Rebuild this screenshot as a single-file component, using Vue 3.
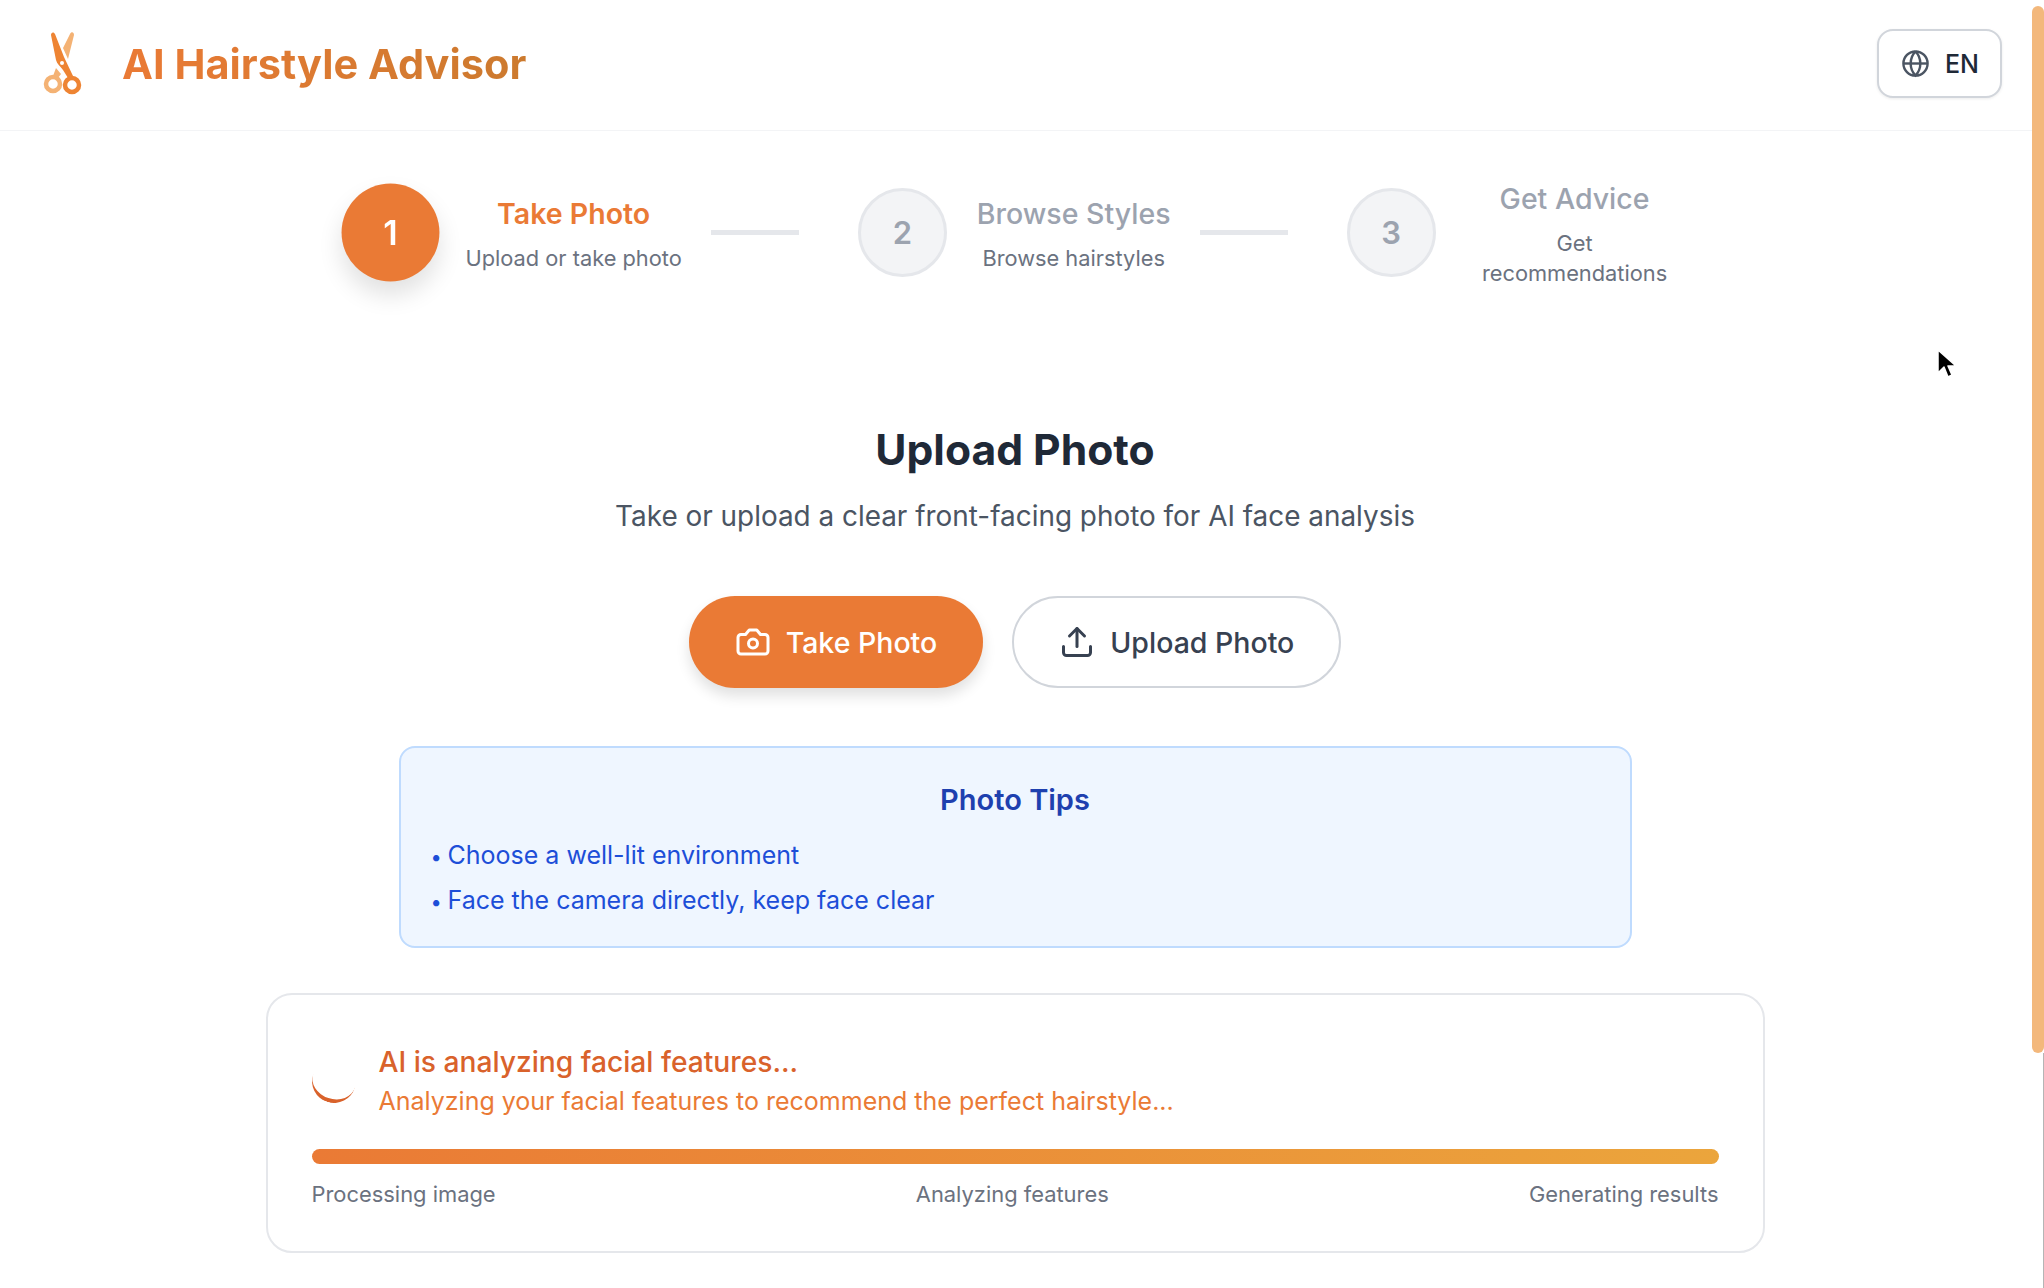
<template>
  <div class="app">
    <header class="topbar">
      <div class="brand">
        <svg class="logo" viewBox="0 0 70 90" aria-hidden="true">
          <path fill="#f4b274" d="M40 15c1-2.500 4-2.500 4 1L38 40 33 29Z" />
          <circle cx="23" cy="65" r="7" fill="none" stroke="#f4b274" stroke-width="4.500" />
          <path fill="#f4b274" d="M26 49l5 6-3 4-5-2Z" />
          <path fill="#ee8433" d="M21 16c0-3 3-3.500 4-1l9 23 9 19-5 2-5-8c-3-4-6-6-7-10Z" />
          <circle cx="42" cy="66" r="7" fill="none" stroke="#ee8433" stroke-width="4.500" />
          <circle cx="32" cy="44" r="2" fill="#fff" />
        </svg>
        <h1 class="brand-name">AI Hairstyle Advisor</h1>
      </div>
      <button class="lang-btn">
        <svg class="lang-icon" viewBox="0 0 24 24" fill="none" stroke="currentColor" stroke-width="2">
          <circle cx="12" cy="12" r="10" />
          <path d="M12 2a14.500 14.500 0 0 0 0 20 14.500 14.500 0 0 0 0-20" />
          <path d="M2 12h20" />
        </svg>
        <span>EN</span>
      </button>
    </header>

    <main class="page">
      <ol class="stepper">
        <template v-for="(step, i) in steps" :key="step.num">
          <li v-if="i > 0" class="step-line"></li>
          <li class="step" :class="{ active: step.active }">
            <div class="step-circle">{{ step.num }}</div>
            <div class="step-text">
              <div class="step-title">{{ step.title }}</div>
              <div class="step-sub">{{ step.sub }}</div>
            </div>
          </li>
        </template>
      </ol>

      <section class="upload">
        <h2 class="upload-title">Upload Photo</h2>
        <p class="upload-sub">Take or upload a clear front-facing photo for AI face analysis</p>
        <div class="actions">
          <button class="btn btn-primary">
            <svg class="btn-icon" viewBox="0 0 24 24" fill="none" stroke="currentColor" stroke-width="2" stroke-linecap="round" stroke-linejoin="round">
              <path d="M14.500 4h-5L7 7H4a2 2 0 0 0-2 2v9a2 2 0 0 0 2 2h16a2 2 0 0 0 2-2V9a2 2 0 0 0-2-2h-3l-2.500-3z" />
              <circle cx="12" cy="13" r="3" />
            </svg>
            Take Photo
          </button>
          <button class="btn btn-outline">
            <svg class="btn-icon" viewBox="0 0 24 24" fill="none" stroke="currentColor" stroke-width="2" stroke-linecap="round" stroke-linejoin="round">
              <path d="M21 15v4a2 2 0 0 1-2 2H5a2 2 0 0 1-2-2v-4" />
              <path d="M17 8l-5-5-5 5" />
              <path d="M12 3v12" />
            </svg>
            Upload Photo
          </button>
        </div>
      </section>

      <section class="tips">
        <h3 class="tips-title">Photo Tips</h3>
        <ul class="tips-list">
          <li v-for="tip in tips" :key="tip"><span class="dot">•</span>{{ tip }}</li>
        </ul>
      </section>

      <section class="analysis">
        <div class="analysis-head">
          <div class="spinner"></div>
          <div>
            <div class="analysis-title">AI is analyzing facial features...</div>
            <div class="analysis-sub">Analyzing your facial features to recommend the perfect hairstyle...</div>
          </div>
        </div>
        <div class="bar"></div>
        <div class="bar-labels">
          <span>Processing image</span>
          <span>Analyzing features</span>
          <span>Generating results</span>
        </div>
      </section>
    </main>

    <div class="scroll-track"></div>
    <div class="scroll-thumb"></div>
    <svg class="cursor" viewBox="0 0 20 30" aria-hidden="true">
      <path d="M2 1v23l6-6 4 10 4-2-4-9h8Z" fill="#000" stroke="#fff" stroke-width="1.500" stroke-linejoin="round" />
    </svg>
  </div>
</template>

<script setup>
const steps = [
  { num: 1, title: 'Take Photo', sub: 'Upload or take photo', active: true },
  { num: 2, title: 'Browse Styles', sub: 'Browse hairstyles' },
  { num: 3, title: 'Get Advice', sub: 'Get recommendations' }
]

const tips = [
  'Choose a well-lit environment',
  'Face the camera directly, keep face clear'
]
</script>

<style>
html, body {
  margin: 0;
  background: #fff;
  overflow: hidden;
}
</style>

<style scoped>
.app {
  position: relative;
  width: 2044px;
  height: 1288px;
  overflow: hidden;
  background: #fff;
  font-family: Inter, "Liberation Sans", sans-serif;
  color: #1f2937;
}

.topbar {
  display: flex;
  align-items: center;
  justify-content: space-between;
  box-sizing: border-box;
  height: 131px;
  padding: 0 42px 3px 30px;
  border-bottom: 1px solid #f3f4f6;
}

.brand {
  display: flex;
  align-items: center;
  gap: 22px;
}

.logo {
  width: 70px;
  height: 90px;
}

.brand-name {
  margin: 0;
  font-size: 41.500px;
  font-weight: 700;
  background: linear-gradient(90deg, #ea7a35, #cc7a2e);
  -webkit-background-clip: text;
  background-clip: text;
  color: transparent;
}

.lang-btn {
  display: flex;
  align-items: center;
  gap: 15px;
  box-sizing: border-box;
  width: 125px;
  height: 69px;
  padding: 0 22px;
  background: #fff;
  border: 2px solid #d1d5db;
  border-radius: 16px;
  box-shadow: 0 1px 3px rgba(0, 0, 0, 0.08);
  font: 500 25px Inter, sans-serif;
  color: #1f2937;
}

.lang-icon {
  width: 29px;
  height: 29px;
  color: #4b5563;
  flex-shrink: 0;
}

.page {
  display: flex;
  flex-direction: column;
  align-items: center;
  width: 2030px;
}

.stepper {
  display: flex;
  align-items: center;
  height: 140px;
  margin: 31px 0 0;
  padding: 0;
  list-style: none;
}

.step {
  display: flex;
  align-items: center;
  gap: 30px;
}

.step-circle {
  display: flex;
  align-items: center;
  justify-content: center;
  box-sizing: border-box;
  width: 89px;
  height: 89px;
  border-radius: 50%;
  border: 3px solid #e5e7eb;
  background: #f3f4f6;
  font-size: 31px;
  font-weight: 600;
  color: #9ca3af;
}

.step.active .step-circle {
  transform: scale(1.1);
  border: none;
  background: #ea7a35;
  color: #fff;
  box-shadow: 0 12px 22px rgba(0, 0, 0, 0.12);
}

.step-text {
  max-width: 218px;
  text-align: center;
}

.step-title {
  font-size: 28.500px;
  font-weight: 500;
  line-height: 44px;
  color: #9ca3af;
  white-space: nowrap;
}

.step.active .step-title {
  font-weight: 600;
  color: #ea7a35;
}

.step-sub {
  font-size: 21.800px;
  line-height: 30px;
  margin-top: 7px;
  color: #6b7280;
}

.step-line {
  width: 88px;
  height: 5px;
  margin: 0 59px 0 29px;
  background: #e5e7eb;
}

.upload {
  display: flex;
  flex-direction: column;
  align-items: center;
}

.upload-title {
  margin: 0;
  padding-top: 120px;
  font-size: 42.600px;
  font-weight: 700;
  line-height: 56px;
  color: #1f2937;
}

.upload-sub {
  margin: 16px 0 0;
  font-size: 27.900px;
  line-height: 44px;
  color: #4b5563;
}

.actions {
  display: flex;
  gap: 29px;
  margin-top: 58px;
}

.btn {
  display: flex;
  align-items: center;
  gap: 15px;
  box-sizing: border-box;
  height: 92px;
  border-radius: 46px;
  font: 500 28.500px Inter, sans-serif;
}

.btn-icon {
  width: 36px;
  height: 36px;
  flex-shrink: 0;
}

.btn-primary {
  padding: 0 46px;
  border: none;
  background: #ea7a35;
  color: #fff;
  box-shadow: 0 8px 14px rgba(0, 0, 0, 0.12);
}

.btn-outline {
  padding: 0 45px;
  border: 2px solid #d1d5db;
  background: #fff;
  color: #374151;
}

.tips {
  box-sizing: border-box;
  width: 1233px;
  height: 202px;
  margin-top: 58px;
  padding: 32px 30px 0;
  background: #eff6ff;
  border: 2px solid #bfdbfe;
  border-radius: 16px;
}

.tips-title {
  margin: 0;
  text-align: center;
  font-size: 29px;
  font-weight: 600;
  line-height: 40px;
  color: #1e40af;
}

.tips-list {
  margin: 13px 0 0;
  padding: 0;
  list-style: none;
  font-size: 25px;
  line-height: 44px;
  color: #1d4ed8;
}

.tips-list li + li {
  margin-top: -1px;
}

.dot {
  display: inline-block;
  width: 17px;
  font-size: 20px;
}

.analysis {
  box-sizing: border-box;
  width: 1499px;
  height: 260px;
  margin-top: 45px;
  padding: 47px 44px 0;
  background: #fff;
  border: 2px solid #e5e7eb;
  border-radius: 26px;
}

.analysis-head {
  display: flex;
  align-items: center;
  gap: 23px;
}

.spinner {
  box-sizing: border-box;
  width: 44px;
  height: 44px;
  flex-shrink: 0;
  border-radius: 50%;
  border-bottom: 4px solid #d9622b;
  transform: rotate(18deg);
}

.analysis-title {
  font-size: 28.200px;
  font-weight: 500;
  line-height: 40px;
  color: #d9622b;
}

.analysis-sub {
  font-size: 25px;
  line-height: 38px;
  color: #ea7a35;
}

.bar {
  height: 15px;
  margin-top: 29px;
  border-radius: 8px;
  background: linear-gradient(90deg, #ea7a35, #eba53c);
}

.bar-labels {
  display: flex;
  justify-content: space-between;
  margin-top: 14px;
  font-size: 21.900px;
  line-height: 32px;
  color: #6b7280;
}

.scroll-track {
  position: absolute;
  top: 1053px;
  right: 0;
  bottom: 0;
  width: 1px;
  background: #b5b5b5;
}

.scroll-thumb {
  position: absolute;
  top: 6px;
  right: 0;
  width: 12px;
  height: 1047px;
  border-radius: 6px;
  background: #f3b87c;
}

.cursor {
  position: absolute;
  left: 1936px;
  top: 349px;
  width: 20px;
  height: 30px;
}
</style>
